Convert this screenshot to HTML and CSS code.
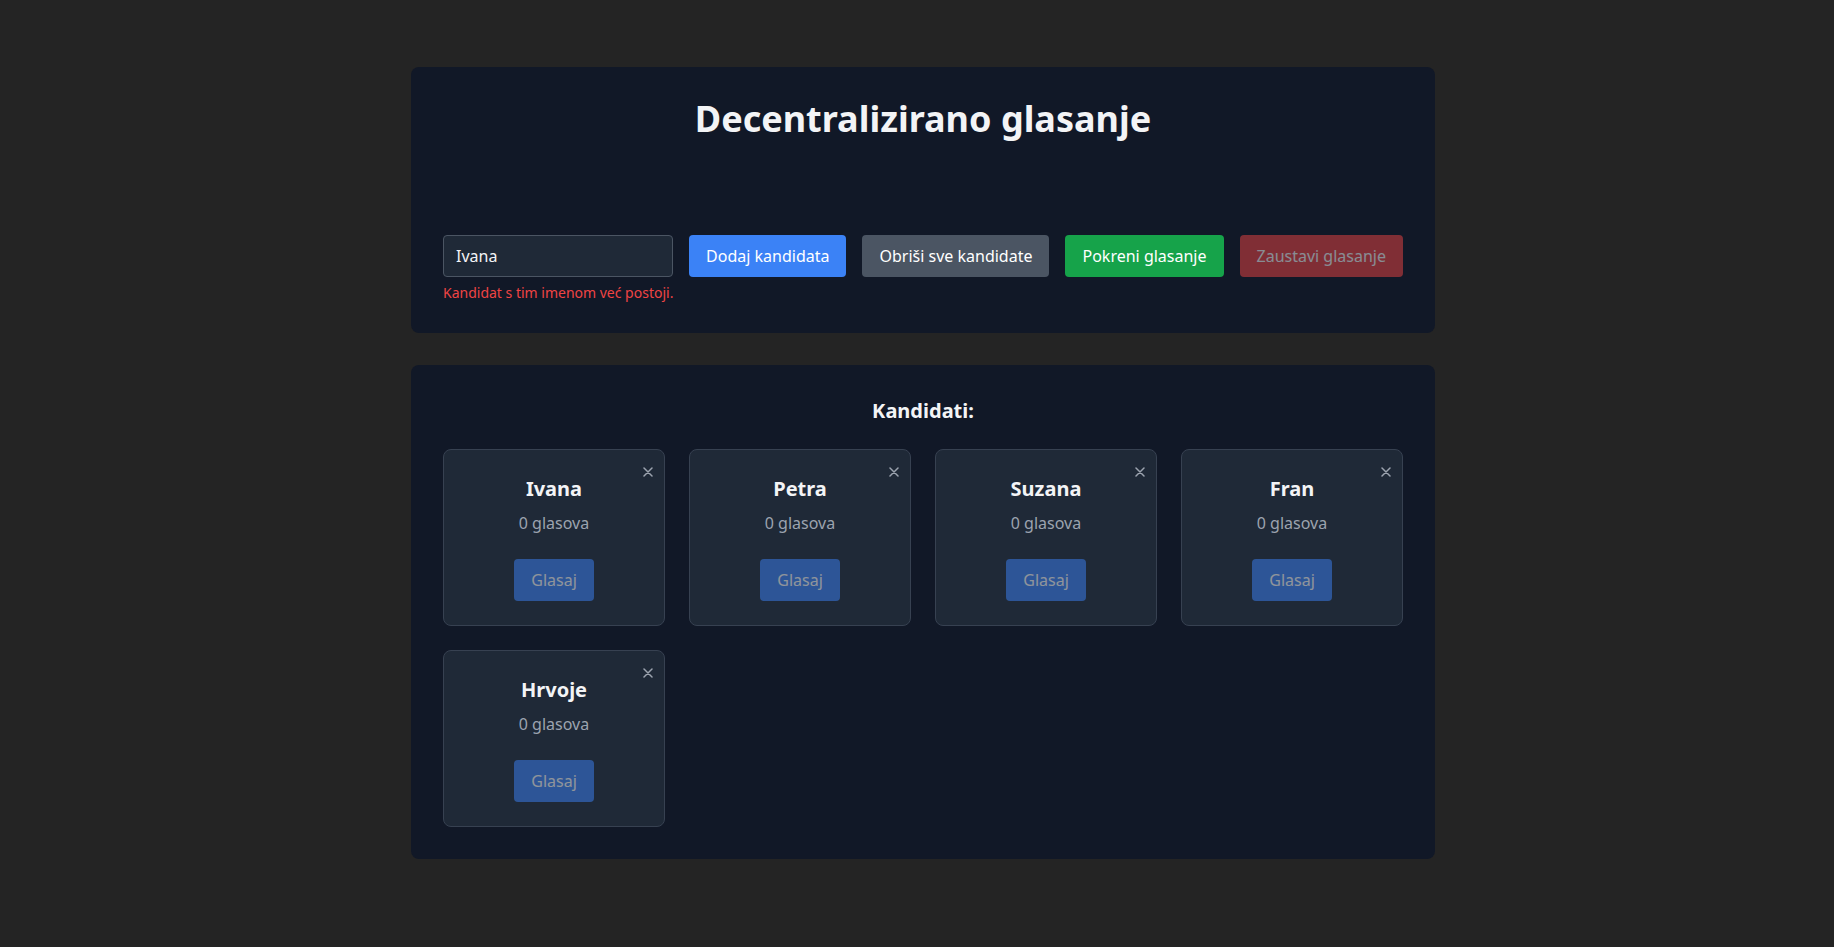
FILE: index.html
```html
<!DOCTYPE html>
<html lang="hr">
<head>
<meta charset="utf-8">
<title>Decentralizirano glasanje</title>
<link rel="stylesheet" href="styles.css">
</head>
<body>
<div class="app">
  <section class="panel panel-top">
    <h1 class="title">Decentralizirano glasanje</h1>
    <div class="controls">
      <input class="name-input" type="text" value="Ivana">
      <button class="btn btn-blue">Dodaj kandidata</button>
      <button class="btn btn-gray">Obriši sve kandidate</button>
      <button class="btn btn-green">Pokreni glasanje</button>
      <button class="btn btn-red" disabled>Zaustavi glasanje</button>
    </div>
    <p class="error">Kandidat s tim imenom već postoji.</p>
  </section>

  <section class="panel">
    <h2 class="subtitle">Kandidati:</h2>
    <div class="grid">
      <div class="card">
        <button class="remove" aria-label="Ukloni"><svg width="10" height="10" viewBox="0 0 10 10"><path d="M1 1L9 9M9 1L1 9" stroke="#9ca3af" stroke-width="1.5" stroke-linecap="round"/></svg></button>
        <h3 class="card-name">Ivana</h3>
        <p class="card-votes">0 glasova</p>
        <button class="btn btn-vote" disabled>Glasaj</button>
      </div>
      <div class="card">
        <button class="remove" aria-label="Ukloni"><svg width="10" height="10" viewBox="0 0 10 10"><path d="M1 1L9 9M9 1L1 9" stroke="#9ca3af" stroke-width="1.5" stroke-linecap="round"/></svg></button>
        <h3 class="card-name">Petra</h3>
        <p class="card-votes">0 glasova</p>
        <button class="btn btn-vote" disabled>Glasaj</button>
      </div>
      <div class="card">
        <button class="remove" aria-label="Ukloni"><svg width="10" height="10" viewBox="0 0 10 10"><path d="M1 1L9 9M9 1L1 9" stroke="#9ca3af" stroke-width="1.5" stroke-linecap="round"/></svg></button>
        <h3 class="card-name">Suzana</h3>
        <p class="card-votes">0 glasova</p>
        <button class="btn btn-vote" disabled>Glasaj</button>
      </div>
      <div class="card">
        <button class="remove" aria-label="Ukloni"><svg width="10" height="10" viewBox="0 0 10 10"><path d="M1 1L9 9M9 1L1 9" stroke="#9ca3af" stroke-width="1.5" stroke-linecap="round"/></svg></button>
        <h3 class="card-name">Fran</h3>
        <p class="card-votes">0 glasova</p>
        <button class="btn btn-vote" disabled>Glasaj</button>
      </div>
      <div class="card">
        <button class="remove" aria-label="Ukloni"><svg width="10" height="10" viewBox="0 0 10 10"><path d="M1 1L9 9M9 1L1 9" stroke="#9ca3af" stroke-width="1.5" stroke-linecap="round"/></svg></button>
        <h3 class="card-name">Hrvoje</h3>
        <p class="card-votes">0 glasova</p>
        <button class="btn btn-vote" disabled>Glasaj</button>
      </div>
    </div>
  </section>
</div>
</body>
</html>
```

FILE: styles.css
```css
* { box-sizing: border-box; }

html, body {
  margin: 0;
  background: #242424;
}

body {
  font-family: "Noto Sans", "Open Sans", sans-serif;
  color: #f3f4f6;
  padding: 67px 0 0 12px;
  min-height: 947px;
}

.app {
  width: 1024px;
  margin: 0 auto;
  display: flex;
  flex-direction: column;
  gap: 32px;
}

.panel {
  background: #111827;
  border-radius: 8px;
  padding: 32px;
}

.title {
  margin: 0 0 96px;
  font-size: 36px;
  line-height: 40px;
  font-weight: 700;
  text-align: center;
  color: #f3f4f6;
}

.controls {
  display: flex;
  gap: 16px;
}

.name-input {
  flex: 1;
  min-width: 0;
  height: 42px;
  padding: 0 12px;
  background: #1f2937;
  border: 1px solid #4b5563;
  border-radius: 4px;
  color: #f3f4f6;
  font-family: "Noto Sans", "Open Sans", sans-serif;
  font-size: 16px;
  outline: none;
}

.btn {
  font-family: "Noto Sans", "Open Sans", sans-serif;
  font-size: 16px;
  line-height: 24px;
  padding: 8px 16px;
  border: 1px solid transparent;
  border-radius: 4px;
  color: #ffffff;
  white-space: nowrap;
  cursor: pointer;
}

.btn-blue { background: #3b82f6; }
.btn-gray { background: #4b5563; }
.btn-green { background: #16a34a; }
.btn-red { background: #ef4444; opacity: 0.5; cursor: not-allowed; }

.error {
  margin: 7px 0 0;
  font-size: 14px;
  line-height: 17px;
  color: #ef4444;
}

.subtitle {
  margin: 0 0 24px;
  font-size: 20px;
  line-height: 28px;
  font-weight: 700;
  text-align: center;
  color: #f3f4f6;
}

.grid {
  display: grid;
  grid-template-columns: repeat(4, 1fr);
  gap: 24px;
}

.card {
  position: relative;
  background: #1f2937;
  border: 1px solid #374151;
  border-radius: 8px;
  padding: 25px 24px 24px;
  display: flex;
  flex-direction: column;
  align-items: center;
}

.remove {
  position: absolute;
  top: 15px;
  right: 9px;
  width: 14px;
  height: 14px;
  padding: 0;
  border: 0;
  background: transparent;
  display: flex;
  align-items: center;
  justify-content: center;
  cursor: pointer;
}

.card-name {
  margin: 0;
  font-size: 20px;
  line-height: 28px;
  font-weight: 700;
  color: #f3f4f6;
}

.card-votes {
  margin: 8px 0 0;
  font-size: 16px;
  line-height: 24px;
  color: #9ca3af;
}

.btn-vote {
  margin-top: 24px;
  background: #3b82f6;
  opacity: 0.5;
  cursor: not-allowed;
}
```
